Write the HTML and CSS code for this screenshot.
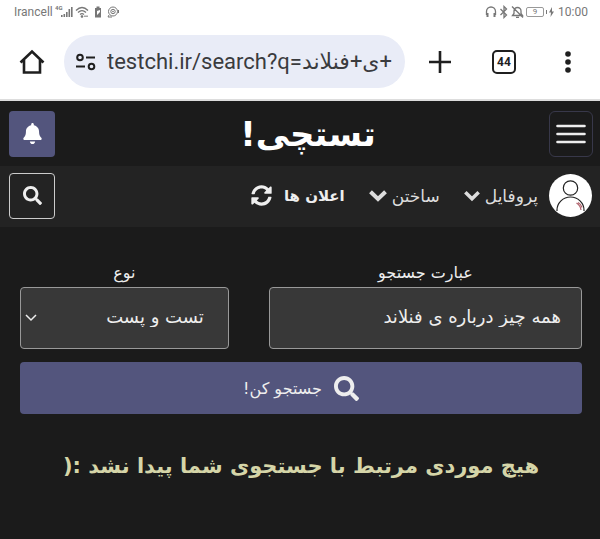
FILE: index.html
```html
<!DOCTYPE html>
<html lang="fa" dir="rtl">
<head>
  <meta charset="UTF-8">
  <meta name="viewport" content="width=device-width, initial-scale=1.0">
  <title>جستجو - تستچی</title>
  <link rel="stylesheet" href="styles.css">
</head>
<body>

  <!-- phone status bar -->
  <div class="status" dir="ltr">
    <div class="status-side">
      <span>Irancell</span>
      <svg width="18" height="14" viewBox="0 0 18 14" fill="currentColor">
        <text x="0" y="5" font-size="6" font-weight="bold">4G</text>
        <path d="M6 10h1.6v2H6zM8.500 9h1.600v3H8.500zM11 7h1.600v5H11zM13.500 4h1.600v8H13.500zM16 2h1.600v10H16z"/>
      </svg>
      <svg width="14" height="14" viewBox="0 0 14 14" fill="none" stroke="currentColor" stroke-width="1.300">
        <path d="M1 5.500Q7-.5 13 5.500M3 7.500Q7 3.800 11 7.500M5 9.500Q7 7.900 9 9.500"/>
        <circle cx="7" cy="11.500" r=".7" fill="currentColor"/>
        <path d="M10 10.500v1.500M12 10.500v1.500"/>
      </svg>
      <svg class="gap" width="8" height="14" viewBox="0 0 8 14" fill="currentColor">
        <path fill-rule="evenodd" d="M2.500 1.500h3V3H7v9.500H1V3h1.500zM3 6v4l3-3V5z"/>
      </svg>
      <svg class="gap" width="12" height="14" viewBox="0 0 12 14" fill="none" stroke="currentColor">
        <circle cx="6" cy="6.500" r="4.500"/>
        <circle cx="6" cy="6.500" r="2.200"/>
        <circle cx="6" cy="6.500" r=".5"/>
        <path d="M2 10l-1 2h4M11.500 5v3"/>
      </svg>
    </div>
    <div class="status-side">
      <svg width="12" height="14" viewBox="0 0 12 14" fill="none" stroke="currentColor" stroke-width="1.300">
        <path d="M1.500 10V6.500a4.500 4.500 0 0 1 9 0V10"/>
        <path d="M2.500 8v4M9.500 8v4" stroke-width="2"/>
      </svg>
      <svg width="10" height="14" viewBox="0 0 10 14" fill="none" stroke="currentColor" stroke-width="1.300">
        <path d="M1.500 4l6 6L5 12.500v-11L7.500 4l-6 6"/>
      </svg>
      <svg width="13" height="14" viewBox="0 0 13 14" fill="none" stroke="currentColor" stroke-width="1.300">
        <path d="M1.500 10.500h10L10 8.500V6a3.500 3.500 0 0 0-7 0v2.500zM5 12.300h3M1 1.500l11 11"/>
      </svg>
      <span class="battery">9</span>
      <svg width="8" height="14" viewBox="0 0 8 14" fill="currentColor">
        <path d="M0 5h1v4H0zM6 2L3 7.500h2L4.500 12 8 6.500H6z"/>
      </svg>
      <span class="clock">10:00</span>
    </div>
  </div>

  <!-- browser toolbar -->
  <div class="toolbar" dir="ltr">
    <button class="tool" aria-label="Home">
      <svg width="26" height="26" viewBox="0 0 26 26" fill="none" stroke="currentColor" stroke-width="2.600">
        <path d="M1.500 13.500L13 2.500l11.500 11M5 11v12.500h16V11"/>
      </svg>
    </button>
    <div class="address">
      <svg width="20" height="18" viewBox="0 0 20 18" fill="none" stroke="currentColor" stroke-width="2">
        <circle cx="4" cy="4.500" r="2.800"/>
        <path d="M10 4.500h9M0 13.500h9"/>
        <circle cx="15.500" cy="13.500" r="2.800"/>
      </svg>
      <input type="text" aria-label="Address" dir="ltr" value="testchi.ir/search?q=&rlm;+ی+فنلاند">
    </div>
    <button class="tool" aria-label="New tab">
      <svg width="22" height="22" viewBox="0 0 22 22" stroke="currentColor" stroke-width="2.600">
        <path d="M11 0v22M0 11h22"/>
      </svg>
    </button>
    <button class="tool tabs" aria-label="Tabs"><span>44</span></button>
    <button class="tool" aria-label="More">
      <svg width="6" height="22" viewBox="0 0 6 22" fill="currentColor">
        <circle cx="3" cy="3" r="2.800"/>
        <circle cx="3" cy="11" r="2.800"/>
        <circle cx="3" cy="19" r="2.800"/>
      </svg>
    </button>
  </div>

  <header class="header">
    <button class="square menu" aria-label="منو">
      <svg width="30" height="22" viewBox="0 0 30 22" stroke="currentColor" stroke-width="2.600" stroke-linecap="round">
        <path d="M1.500 3h27M1.500 11h27M1.500 19h27"/>
      </svg>
    </button>
    <a class="logo" href="#">تستچی!</a>
    <button class="square bell" aria-label="اعلان ها">
      <svg width="19" height="21" viewBox="0 0 448 512" fill="currentColor">
        <path d="M224 512c35.320 0 63.970-28.650 63.970-64H160.030c0 35.350 28.650 64 63.970 64zm215.390-149.710c-19.320-20.760-55.470-51.990-55.470-154.290 0-77.700-54.480-139.900-127.940-155.160V32c0-17.670-14.320-32-31.980-32s-31.980 14.330-31.980 32v20.840C118.560 68.100 64.080 130.300 64.080 208c0 102.300-36.150 133.530-55.470 154.290-6 6.450-8.660 14.160-8.610 21.710.11 16.400 12.980 32 32.100 32h383.800c19.120 0 32-15.600 32.100-32 .05-7.550-2.610-15.270-8.610-21.710z"/>
      </svg>
    </button>
  </header>

  <nav class="nav">
    <a class="avatar" href="#" aria-label="پروفایل">
      <svg width="43" height="43" viewBox="0 0 43 43" fill="none" stroke="#222" stroke-width="1.200">
        <circle cx="21.500" cy="21.500" r="21.500" fill="#fff" stroke="none"/>
        <circle cx="21.500" cy="14" r="7.200"/>
        <path d="M8 37v-1a13.500 13 0 0 1 27 0v1"/>
        <path d="M27.500 29q4 2.500 4.500 7M29 28.500q3 1.500 4 5" stroke="#b0626c"/>
      </svg>
    </a>
    <a class="item" href="#">پروفایل
      <svg width="16" height="12" viewBox="0 0 18 12" fill="none" stroke="currentColor" stroke-width="4">
        <path d="M1.500 1.800L9 9l7.500-7.200"/>
      </svg>
    </a>
    <a class="item" href="#">ساختن
      <svg width="18" height="12" viewBox="0 0 18 12" fill="none" stroke="currentColor" stroke-width="4">
        <path d="M1.500 1.800L9 9l7.500-7.200"/>
      </svg>
    </a>
    <a class="item notices" href="#">اعلان ها
      <svg width="21" height="21" viewBox="0 0 512 512" fill="currentColor">
        <path d="M370.720 133.280C339.458 104.008 298.888 87.962 255.848 88c-77.458.068-144.328 53.178-162.791 126.850-1.344 5.363-6.122 9.150-11.651 9.150H24.103c-7.498 0-13.194-6.807-11.807-14.176C33.933 94.924 134.813 8 256 8c66.448 0 126.791 26.136 171.315 68.685L463.030 40.970C478.149 25.851 504 36.559 504 57.941V192c0 13.255-10.745 24-24 24H345.941c-21.382 0-32.090-25.851-16.971-40.971l41.750-41.749zM32 296h134.059c21.382 0 32.090 25.851 16.971 40.971l-41.750 41.750c31.262 29.273 71.835 45.319 114.876 45.280 77.418-.07 144.315-53.144 162.787-126.849 1.344-5.363 6.122-9.150 11.651-9.150h57.304c7.498 0 13.194 6.807 11.807 14.176C478.067 417.076 377.187 504 256 504c-66.448 0-126.791-26.136-171.315-68.685L48.970 471.030C33.851 486.149 8 475.441 8 454.059V320c0-13.255 10.745-24 24-24z"/>
      </svg>
    </a>
    <button class="square find" aria-label="جستجو">
      <svg width="19" height="19" viewBox="0 0 512 512" fill="currentColor">
        <path d="M505 442.700L405.300 343c-4.500-4.500-10.600-7-17-7H372c27.600-35.300 44-79.700 44-128C416 93.100 322.900 0 208 0S0 93.100 0 208s93.100 208 208 208c48.300 0 92.700-16.400 128-44v16.300c0 6.400 2.500 12.500 7 17l99.700 99.700c9.400 9.400 24.600 9.400 33.900 0l28.300-28.300c9.400-9.400 9.400-24.600.1-34zM208 336c-70.700 0-128-57.200-128-128 0-70.700 57.200-128 128-128 70.700 0 128 57.200 128 128 0 70.700-57.200 128-128 128z"/>
      </svg>
    </button>
  </nav>

  <main class="main">
    <form class="form">
      <div class="field">
        <label for="q">عبارت جستجو</label>
        <input class="box" type="text" id="q" value="همه چیز درباره ی فنلاند">
      </div>
      <div class="field">
        <label for="type">نوع</label>
        <div class="select">
          <select class="box" id="type">
            <option>تست و پست</option>
          </select>
          <svg class="arrow" width="12" height="8" viewBox="0 0 12 8" fill="none" stroke="currentColor" stroke-width="1.500">
            <path d="M1 1l5 5 5-5"/>
          </svg>
        </div>
      </div>
      <button class="submit" type="button">
        <svg width="25" height="25" viewBox="0 0 512 512" fill="currentColor">
          <path d="M505 442.700L405.300 343c-4.500-4.500-10.600-7-17-7H372c27.600-35.300 44-79.700 44-128C416 93.100 322.900 0 208 0S0 93.100 0 208s93.100 208 208 208c48.300 0 92.700-16.400 128-44v16.300c0 6.400 2.500 12.500 7 17l99.700 99.700c9.400 9.400 24.600 9.400 33.900 0l28.300-28.300c9.400-9.400 9.400-24.600.1-34zM208 336c-70.700 0-128-57.200-128-128 0-70.700 57.200-128 128-128 70.700 0 128 57.200 128 128 0 70.700-57.200 128-128 128z"/>
        </svg>
        جستجو کن!
      </button>
    </form>
    <h1>هیچ موردی مرتبط با جستجوی شما پیدا نشد :(</h1>
  </main>

</body>
</html>
```

FILE: styles.css
```css
* {
  box-sizing: border-box;
}

body {
  margin: 0;
  min-height: 100vh;
  background-color: #1b1b1b;
  color: #eee;
  font-family: "DejaVu Sans", sans-serif;
  font-size: 16px;
}

button,
input,
select {
  font: inherit;
  color: inherit;
}

button {
  padding: 0;
  border: none;
  background: none;
  cursor: pointer;
}

a {
  color: inherit;
  text-decoration: none;
}

svg {
  flex-shrink: 0;
}

/* status bar */
.status {
  display: flex;
  justify-content: space-between;
  height: 24px;
  padding: 0 12px 0 14px;
  background-color: #fff;
  color: #777;
  font-family: Roboto, sans-serif;
  font-size: 12px;
}

.status-side {
  display: flex;
  align-items: center;
  gap: 2px;
}

.gap {
  margin-left: 3px;
}

.battery {
  width: 18px;
  border: 1px solid #999;
  border-radius: 2px;
  font-size: 8px;
  line-height: 8px;
  text-align: center;
}

.clock {
  margin-left: 2px;
}

/* browser toolbar */
.toolbar {
  display: flex;
  align-items: center;
  height: 77px;
  background-color: #fff;
  border-bottom: 2px solid #ddd;
  color: #1f1f1f;
}

.tool {
  display: flex;
  align-items: center;
  justify-content: center;
  width: 64px;
  height: 48px;
}

.address {
  display: flex;
  flex: 1;
  align-items: center;
  gap: 11px;
  min-width: 0;
  height: 53px;
  margin-right: 3px;
  padding: 0 8px 0 12px;
  border-radius: 27px;
  background-color: #e9ecf7;
}

.address input {
  flex: 1;
  min-width: 0;
  padding: 0;
  border: none;
  outline: none;
  background: none;
  color: #3a3b3e;
  font-family: Roboto, "DejaVu Sans", sans-serif;
  font-size: 22px;
}

.tabs span {
  width: 24px;
  border: 2px solid #1f1f1f;
  border-radius: 5px;
  font-family: Roboto, sans-serif;
  font-size: 12px;
  font-weight: bold;
  line-height: 20px;
}

/* site header */
.header {
  display: flex;
  align-items: center;
  justify-content: space-between;
  height: 65px;
  padding: 0 7px 0 9px;
}

.square {
  display: flex;
  align-items: center;
  justify-content: center;
  width: 46px;
  height: 46px;
  border-radius: 4px;
}

.menu {
  width: 44px;
  border: 1px solid #38384a;
  border-radius: 6px;
}

.bell {
  background-color: #53557d;
  color: #fff;
}

.logo {
  padding-left: 12px;
  color: #fff;
  font-size: 34px;
  font-weight: bold;
  line-height: 46px;
}

.nav {
  display: flex;
  align-items: center;
  height: 61px;
  padding: 0 8px 2px 9px;
  background-color: #232323;
}

.avatar {
  display: flex;
  margin-left: 11px;
}

.item {
  display: flex;
  align-items: center;
  gap: 5px;
  margin-left: 24px;
  color: #ddd;
  font-size: 17px;
  white-space: nowrap;
}

.notices {
  gap: 12px;
  color: #eee;
  font-size: 15px;
  font-weight: bold;
}

.find {
  margin-right: auto;
  border: 1px solid #ccc;
}

/* search form */
.main {
  padding: 32px 18px 32px 20px;
}

.form {
  display: grid;
  grid-template-columns: 3fr 2fr;
  gap: 13px 40px;
}

.field {
  display: flex;
  flex-direction: column;
}

.field label {
  line-height: 28px;
  text-align: center;
}

.box {
  width: 100%;
  height: 62px;
  padding: 0 20px 4px;
  border: 1px solid #999;
  border-radius: 4px;
  background-color: #383838;
  font-size: 18px;
}

.select {
  position: relative;
}

.select .box {
  appearance: none;
  padding: 0 24px 4px;
}

.arrow {
  position: absolute;
  top: 27px;
  left: 5px;
  pointer-events: none;
}

.submit {
  display: flex;
  grid-column: 1 / -1;
  align-items: center;
  justify-content: center;
  gap: 12px;
  height: 52px;
  border-radius: 4px;
  background-color: #53557d;
}

h1 {
  margin: 36px 0 0;
  color: #d5d5a8;
  font-size: 21px;
  line-height: 32px;
  text-align: center;
}
```
